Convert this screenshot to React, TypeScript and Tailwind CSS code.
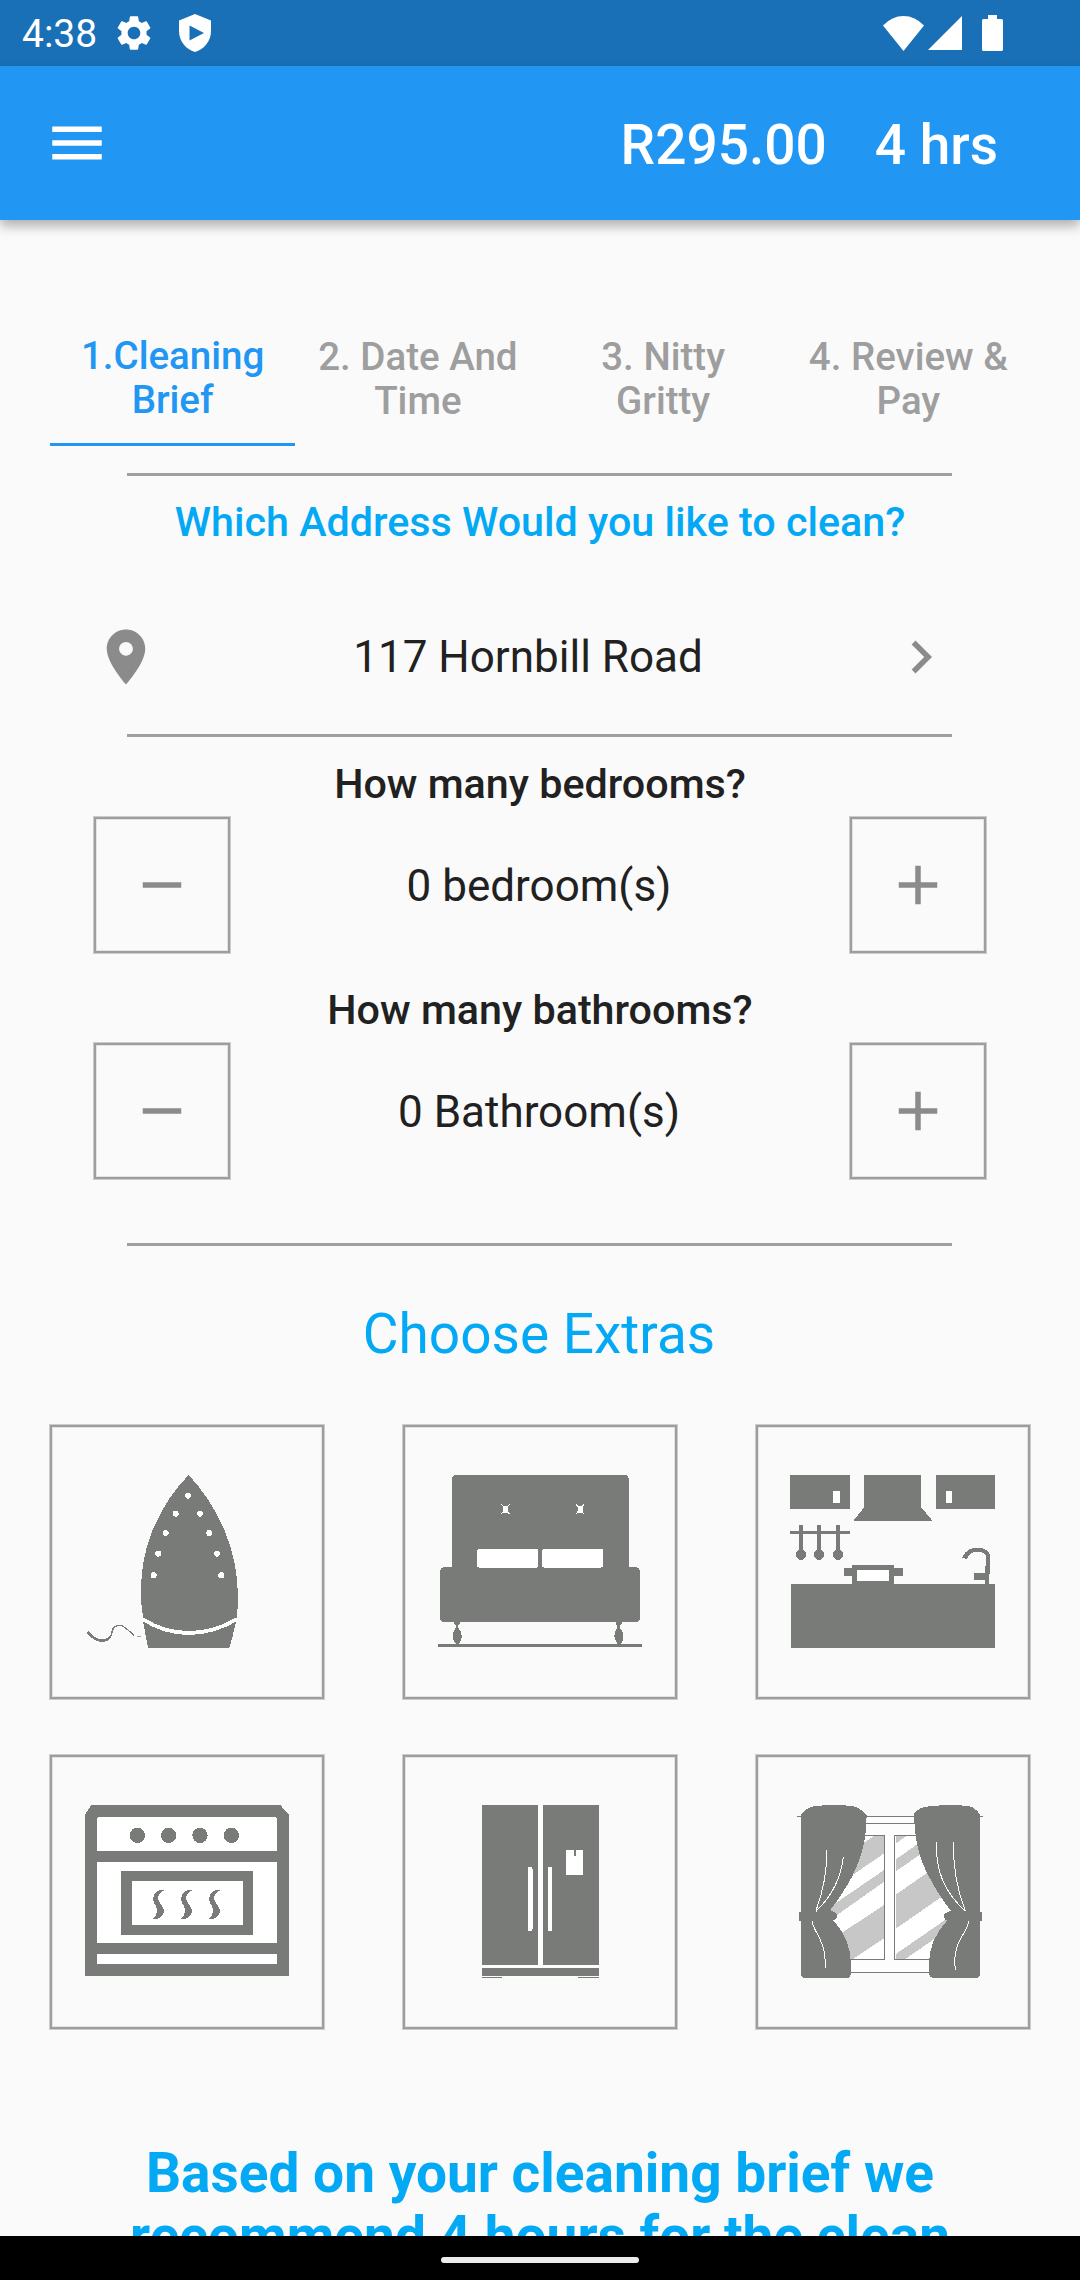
import type { ReactNode } from "react";

const G = "#787b78";

function Iron() {
  const holes = [[444, 242], [407, 296], [480, 296], [377, 354], [508, 354], [355, 416], [531, 416], [341, 481], [544, 481]];
  return (
    <svg viewBox="36 36 810 810" className="h-full w-full" shapeRendering="crispEdges">
      <path fill={G} d="M446 180C490 227 530 288 553 345C582 412 594 478 594 552Q593 585 590 608Q520 648 447 648Q373 648 309 608Q303 570 303 530C303 465 313 408 336 350C362 285 400 226 446 180Z" />
      <path fill={G} d="M309 618Q373 660 447 660Q522 659 588 619Q580 660 568 699H324Q315 650 309 618Z" />
      <path d="M309 613Q373 654 447 654Q520 654 590 613" fill="none" stroke="#fff" strokeWidth="11" />
      {holes.map(([x, y]) => <circle key={`${x}-${y}`} cx={x} cy={y} r="9" fill="#fff" />)}
      <path fill={G} d="M146 648Q162 671 188 673Q210 671 213 655Q214 629 240 629Q252 630 284 661L282 663Q250 633 240 633Q219 634 217 655Q212 680 187 681Q160 680 140 653Z" />
      <path d="M290 664H303" stroke={G} strokeWidth="2" />
    </svg>
  );
}

function Bed() {
  return (
    <svg viewBox="45 36 810 810" className="h-full w-full" shapeRendering="crispEdges">
      <rect x="186" y="180" width="530" height="300" rx="11" fill={G} />
      <rect x="150" y="456" width="600" height="166" rx="14" fill={G} />
      <rect x="261" y="402" width="184" height="56" rx="6" fill="#fff" />
      <rect x="456" y="402" width="183" height="56" rx="6" fill="#fff" />
      {[346, 570].map((x) => (
        <g key={x} fill="#fff" stroke="#fff" strokeWidth="3">
          <rect x={x - 6} y="274" width="13" height="17" />
          <path d={`M${x - 12} 268l6 7M${x + 12} 268l-6 7M${x - 12} 297l6 -7M${x + 12} 297l-6 -7`} />
        </g>
      ))}
      {[202, 687].map((x) => (
        <path key={x} fill={G} d={`M${x - 9} 620h18l-2 8l-5 5v5q10 10 11 24q0 16 -9 25h-8q-10 -12 -10 -25q1 -14 9 -24v-6l-5 -5z`} />
      ))}
      <rect x="144" y="687" width="612" height="9" fill={G} />
    </svg>
  );
}

function Kitchen() {
  return (
    <svg viewBox="54 36 810 810" className="h-full w-full" shapeRendering="crispEdges" fill={G}>
      <rect x="151" y="180" width="179" height="102" />
      <rect x="588" y="180" width="177" height="102" />
      <path d="M372 180H543V276L579 319H339L372 277Z" />
      <rect x="278" y="228" width="21" height="36" fill="#fff" />
      <rect x="618" y="228" width="18" height="36" fill="#fff" />
      <rect x="150" y="348" width="180" height="9" />
      {[183, 237, 294].map((x) => (
        <g key={x}>
          <rect x={x - 6} y="330" width="12" height="80" />
          <circle cx={x} cy="419" r="15.5" />
        </g>
      ))}
      <path d="M312 459H336V450H462V459H489V483H462V510H336V483H312Z" />
      <rect x="351" y="465" width="96" height="33" fill="#fff" />
      <path d="M666 428C677 406 690 398 713 398C740 400 751 410 751 430L747 508H735V495H702V474H735L738 430C738 416 730 410 713 410C697 410 689 416 680 432Z" />
      <rect x="153" y="507" width="612" height="192" />
    </svg>
  );
}

function Oven() {
  return (
    <svg viewBox="36 36 810 810" className="h-full w-full" shapeRendering="crispEdges" fill={G}>
      <path d="M154 180H721L747 210V694H135V208Z" />
      <path fill="#fff" d="M176 216H706L711 221V318H171V221Z" />
      <rect x="171" y="351" width="540" height="243" fill="#fff" />
      <rect x="171" y="627" width="540" height="30" fill="#fff" />
      {[292, 386, 480, 574].map((x) => <circle key={x} cx={x} cy="271" r="23" />)}
      <rect x="244" y="378" width="395" height="192" />
      <rect x="276" y="408" width="333" height="133" fill="#fff" />
      {[339, 423, 507].map((x) => (
        <path key={x} d={`M${x + 33} 435Q${x + 4} 434 ${x} 460Q${x + 1} 474 ${x + 9} 484Q${x + 19} 502 ${x} 521Q${x + 26} 526 ${x + 33} 500Q${x + 33} 489 ${x + 22} 475Q${x + 5} 450 ${x + 33} 436Z`} />
      ))}
    </svg>
  );
}

function Fridge() {
  return (
    <svg viewBox="45 36 810 810" className="h-full w-full" shapeRendering="crispEdges" fill={G}>
      <rect x="276" y="180" width="351" height="519" fill="#fdfdfd" />
      <rect x="276" y="180" width="168" height="480" />
      <rect x="459" y="180" width="168" height="480" />
      <rect x="414" y="365" width="14" height="194" rx="7" fill="#fff" />
      <rect x="474" y="365" width="12" height="194" rx="6" fill="#fff" />
      <path d="M528 315H552V333H558V315H579V390H528Z" fill="#fff" />
      <rect x="276" y="669" width="351" height="24" />
      <rect x="276" y="695" width="60" height="4" />
      <rect x="564" y="695" width="63" height="4" />
    </svg>
  );
}

function Curtains() {
  return (
    <svg viewBox="54 36 810 810" className="h-full w-full" shapeRendering="crispEdges">
      <defs>
        <clipPath id="pane-left"><rect x="255" y="273" width="177" height="370" /></clipPath>
        <clipPath id="pane-right"><rect x="468" y="273" width="185" height="370" /></clipPath>
      </defs>
      <rect x="250" y="213" width="380" height="468" fill="#fdfdfd" />
      <rect x="255" y="273" width="398" height="370" fill="#fff" />
      <g clipPath="url(#pane-left)" fill="#c8c7c7">
        <path d="M366 297L402 273H434V324L336 391V300Z" />
        <path d="M434 374V409L270 525V486Z" />
        <path d="M434 479V579L333 646H250V600Z" />
      </g>
      <g clipPath="url(#pane-right)" fill="#c8c7c7">
        <path d="M466 273H499L466 297Z" />
        <path d="M466 344L560 278V315L466 380Z" />
        <path d="M466 450L580 370L620 435V445L466 552Z" />
        <path d="M466 628L640 508V542L495 643H466Z" />
      </g>
      <g fill="none" stroke={G} strokeWidth="3">
        <path d="M370 214.500H530M370 235H530M370 271.500H434V643.500H320M540 271.500H464.500V643.500H590M320 682H590" />
        <path d="M171 213.500H190M715 213.500H729" strokeWidth="4" />
      </g>
      <g fill={G}>
        <path d="M183 210Q197 187 225 183Q275 178 325 182Q355 182 380 210C378 290 366 335 336 395Q306 450 270 496Q291 501 291 514Q291 524 280 526C315 565 331 605 332 650V690Q330 699 323 699H195Q183 699 183 687V527H177V501H183Z" />
        <path d="M720 208Q703 185 685 183Q635 178 575 183Q538 185 522 205C525 290 537 340 567 395Q595 450 633 498Q612 502 612 514Q612 524 622 526C586 565 569 605 567 650V685Q569 699 582 699H708Q720 699 720 685V527H726V501H720Z" />
      </g>
      <g fill="none" stroke="#fff" strokeWidth="3">
        <path d="M260 316Q263 400 228 497M310 335Q300 430 228 499M217 529C218 560 258 580 256 668" />
        <path d="M590 290C585 370 610 440 676 498M641 290C638 370 650 430 676 498M686 529C680 570 635 590 646 675" />
      </g>
    </svg>
  );
}

function Divider({ className }: { className: string }) {
  return <div className={`ml-[127px] h-[3px] w-[825px] shrink-0 bg-[#9e9e9e] ${className}`} />;
}

function Box({ className, children }: { className: string; children: ReactNode }) {
  return (
    <div className={`flex shrink-0 items-center justify-center border-2 border-[#9e9e9e] shadow-[0_0_0_1px_#9e9e9e80,inset_0_0_0_1px_#9e9e9e40] ${className}`}>
      {children}
    </div>
  );
}

function Icon({ d, className = "" }: { d: string; className?: string }) {
  return (
    <svg viewBox="0 0 24 24" className={`size-[66px] shrink-0 ${className}`} fill="currentColor">
      <path fillRule="evenodd" d={d} />
    </svg>
  );
}

function Counter({ title, value, className }: { title: string; value: string; className: string }) {
  return (
    <section className={className}>
      <h2 className="text-center text-[41.25px] leading-[48px] font-medium">{title}</h2>
      <div className="mx-[94px] mt-[9px] flex items-center justify-between">
        <Box className="size-[136px] text-[#8b8b8b]"><Icon d="M19 13H5v-2h14v2z" /></Box>
        <span className="pt-[2px] pr-[2px] text-[44px]">{value}</span>
        <Box className="size-[136px] text-[#8b8b8b]"><Icon d="M19 13h-6v6h-2v-6H5v-2h6V5h2v6h6v2z" /></Box>
      </div>
    </section>
  );
}

const tabs = [
  ["1.Cleaning", "Brief"],
  ["2. Date And", "Time"],
  ["3. Nitty", "Gritty"],
  ["4. Review &", "Pay"],
];

export default function App() {
  return (
    <div className="flex h-[2280px] w-[1080px] flex-col overflow-hidden bg-[#fafafa] font-['Roboto',sans-serif] text-[#212121]">
      <div className="flex h-[66px] shrink-0 items-center bg-[#1a70b7] pl-[22px] text-white">
        <span className="pt-[2px] text-[39px] leading-[64px]">4:38</span>
        <svg viewBox="0 0 24 24" className="ml-[16px] size-[42px]" fill="currentColor">
          <path d="M19.14 12.94c.04-.3.06-.61.06-.94 0-.32-.02-.64-.07-.94l2.030-1.580c.18-.14.23-.41.12-.61l-1.920-3.320c-.12-.22-.37-.29-.59-.22l-2.390.96c-.5-.38-1.030-.7-1.620-.94l-.36-2.540c-.04-.24-.24-.41-.48-.41h-3.840c-.24 0-.43.17-.47.41l-.36 2.540c-.59.24-1.130.57-1.620.94l-2.390-.96c-.22-.08-.47 0-.59.22L2.740 8.870c-.12.21-.08.47.12.61l2.030 1.580c-.05.3-.09.63-.09.94s.02.64.07.94l-2.030 1.580c-.18.14-.23.41-.12.61l1.920 3.320c.12.22.37.29.59.22l2.390-.96c.5.38 1.030.7 1.620.94l.36 2.540c.05.24.24.41.48.41h3.840c.24 0 .44-.17.47-.41l.36-2.540c.59-.24 1.130-.56 1.620-.94l2.390.96c.22.08.47 0 .59-.22l1.920-3.320c.12-.22.07-.47-.12-.61l-2.010-1.580zM12 15.600c-1.980 0-3.600-1.620-3.600-3.600s1.620-3.600 3.600-3.600 3.600 1.620 3.600 3.600-1.620 3.600-3.600 3.600z" />
        </svg>
        <svg viewBox="0 0 32 38" className="ml-[24px] h-[38px] w-[32px]" fill="currentColor">
          <path fillRule="evenodd" d="M16 0L32 6.500V17C32 27 25 35.500 16 38C7 35.500 0 27 0 17V6.500ZM10.500 11.500V26.500L25 19Z" />
        </svg>
        <svg viewBox="0 0 41 35" className="ml-auto h-[35px] w-[41px]" fill="currentColor">
          <path d="M0 9.500Q9 0 20.500 0T41 9.500L20.500 35Z" />
        </svg>
        <svg viewBox="0 0 34 34" className="ml-[4px] size-[34px]" fill="currentColor"><path d="M34 0V34H0Z" /></svg>
        <svg viewBox="0 0 21 36" className="mr-[77px] ml-[20px] h-[36px] w-[21px]" fill="currentColor">
          <path d="M6 0H15V4H19.500Q21 4 21 5.500V34.500Q21 36 19.500 36H1.500Q0 36 0 34.500V5.500Q0 4 1.500 4H6Z" />
        </svg>
      </div>

      <header className="z-10 flex h-[154px] shrink-0 items-center bg-[#2196f3] pr-[82px] pl-[44px] text-white shadow-[0_6px_11px_rgba(0,0,0,0.3)]">
        <Icon d="M3 18h18v-2H3v2zm0-5h18v-2H3v2zm0-7v2h18V6H3z" />
        <span className="ml-auto pt-[4px] text-[55px] font-medium">R295.00</span>
        <span className="ml-[48px] pt-[4px] text-[55px] font-medium">4 hrs</span>
      </header>

      <main className="flex min-h-0 flex-1 flex-col overflow-hidden">
        <nav className="mr-[49px] ml-[50px] mt-[114px] grid h-[112px] shrink-0 grid-cols-4 text-center text-[38.5px] leading-[44px] font-medium">
          {tabs.map(([a, b], i) => (
            <div key={a} className={i === 0 ? "border-b-3 border-[#2196f3] text-[#2196f3]" : "pt-px text-[#9e9e9e]"}>
              {a}<br />{b}
            </div>
          ))}
        </nav>
        <Divider className="mt-[27px]" />
        <h1 className="mt-[22px] text-center text-[41.25px] leading-[48px] font-medium text-[#03a9f4]">Which Address Would you like to clean?</h1>
        <div className="mt-[78px] flex h-[66px] shrink-0 items-center justify-between pr-[126px] pl-[93px]">
          <Icon className="text-[#8b8b8b]" d="M12 2C8.130 2 5 5.130 5 9c0 5.250 7 13 7 13s7-7.750 7-13c0-3.870-3.130-7-7-7zm0 9.500c-1.380 0-2.500-1.120-2.500-2.500s1.120-2.500 2.500-2.500 2.500 1.120 2.500 2.500-1.120 2.500-2.500 2.500z" />
          <span className="pl-[9px] text-[44px]">117 Hornbill Road</span>
          <Icon className="text-[#8b8b8b]" d="M10 6L8.590 7.410 13.170 12l-4.580 4.590L10 18l6-6z" />
        </div>
        <Divider className="mt-[44px]" />
        <Counter className="mt-[23px]" title="How many bedrooms?" value="0 bedroom(s)" />
        <Counter className="mt-[33px]" title="How many bathrooms?" value="0 Bathroom(s)" />
        <Divider className="mt-[64px]" />
        <h2 className="mt-[56px] pr-[2px] text-center text-[55px] leading-[64px] text-[#03a9f4]">Choose Extras</h2>
        <div className="mx-[50px] mt-[59px] grid shrink-0 grid-cols-[repeat(3,274px)] justify-between gap-y-[56px]">
          {[Iron, Bed, Kitchen, Oven, Fridge, Curtains].map((Art, i) => (
            <Box key={i} className="size-[274px]"><Art /></Box>
          ))}
        </div>
        <p className="mt-[113px] shrink-0 text-center text-[55px] leading-[63px] font-bold whitespace-nowrap text-[#03a9f4]">
          Based on your cleaning brief we<br />recommend 4 hours for the clean
        </p>
      </main>

      <div className="flex h-[44px] shrink-0 items-center justify-center bg-black pt-[3px]">
        <div className="h-[6px] w-[198px] rounded-[3px] bg-[#ececec]" />
      </div>
    </div>
  );
}
